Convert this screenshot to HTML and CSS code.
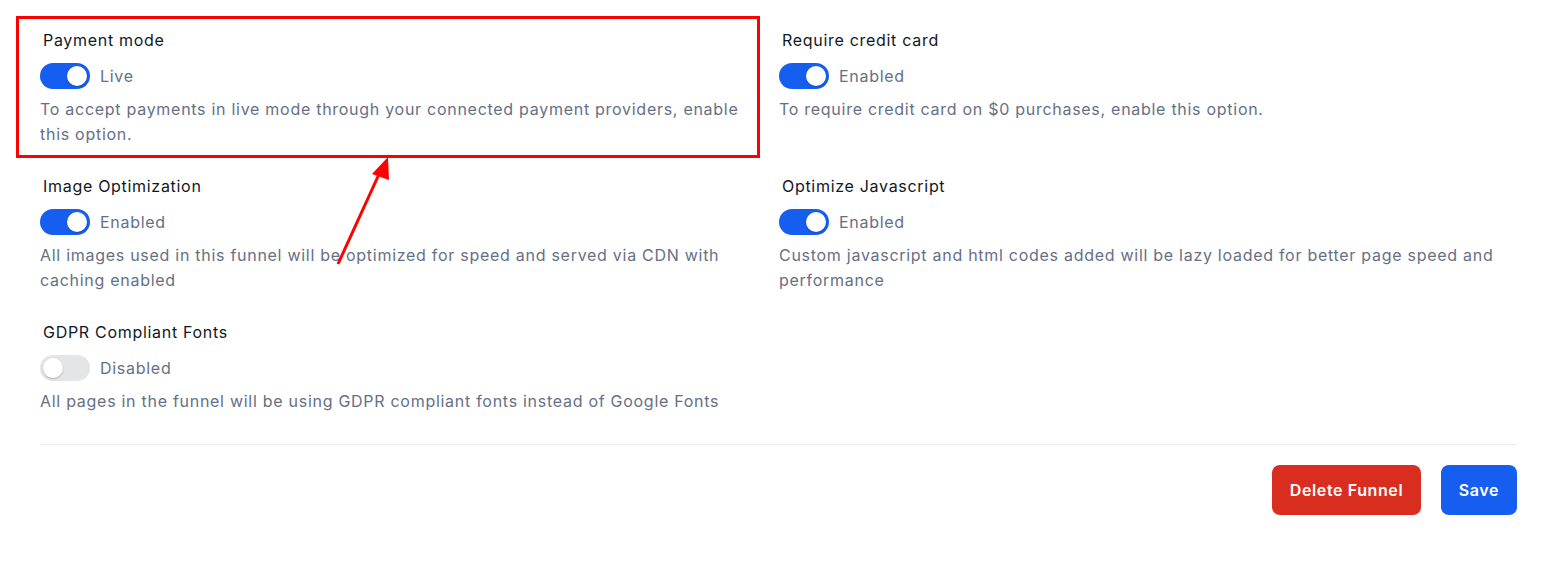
FILE: index.html
```html
<!DOCTYPE html>
<html>
<head>
<meta charset="utf-8">
<link rel="stylesheet" href="styles.css">
</head>
<body>
<div class="page">
  <div class="grid">
    <div class="item">
      <div class="label">Payment mode</div>
      <div class="toggle-row"><span class="toggle on"><span class="knob"></span></span><span class="state">Live</span></div>
      <div class="desc">To accept payments in live mode through your connected payment providers, enable this option.</div>
    </div>
    <div class="item">
      <div class="label">Require credit card</div>
      <div class="toggle-row"><span class="toggle on"><span class="knob"></span></span><span class="state">Enabled</span></div>
      <div class="desc">To require credit card on $0 purchases, enable this option.</div>
    </div>
    <div class="item">
      <div class="label">Image Optimization</div>
      <div class="toggle-row"><span class="toggle on"><span class="knob"></span></span><span class="state">Enabled</span></div>
      <div class="desc">All images used in this funnel will be optimized for speed and served via CDN with caching enabled</div>
    </div>
    <div class="item">
      <div class="label">Optimize Javascript</div>
      <div class="toggle-row"><span class="toggle on"><span class="knob"></span></span><span class="state">Enabled</span></div>
      <div class="desc">Custom javascript and html codes added will be lazy loaded for better page speed and performance</div>
    </div>
    <div class="item">
      <div class="label">GDPR Compliant Fonts</div>
      <div class="toggle-row"><span class="toggle"><span class="knob"></span></span><span class="state">Disabled</span></div>
      <div class="desc">All pages in the funnel will be using GDPR compliant fonts instead of Google Fonts</div>
    </div>
  </div>
  <div class="footer">
    <button class="btn btn-danger">Delete Funnel</button>
    <button class="btn btn-primary">Save</button>
  </div>
</div>
<div class="highlight"></div>
<svg class="arrow" width="1560" height="564" viewBox="0 0 1560 564">
  <line x1="338" y1="264" x2="380" y2="172" stroke="#ff0000" stroke-width="3"/>
  <polygon points="388,157 372,174 389,180" fill="#ff0000"/>
</svg>
</body>
</html>
```
FILE: styles.css
```css
* { box-sizing: border-box; }
html, body { margin: 0; padding: 0; background: #ffffff; }
body {
  font-family: Inter, "Noto Sans", sans-serif;
  width: 1560px;
  height: 564px;
  position: relative;
  overflow: hidden;
}
.page {
  padding: 28px 43px 0 40px;
}
.grid {
  display: grid;
  grid-template-columns: 739px 1fr;
  row-gap: 27.5px;
}
.item {
  padding-right: 14px;
}
.label {
  font-size: 16px;
  line-height: 24px;
  color: #101828;
  padding-left: 3px;
  letter-spacing: 0.7px;
}
.toggle-row {
  display: flex;
  align-items: center;
  gap: 10px;
  margin-top: 11px;
  height: 26px;
}
.toggle {
  width: 50px;
  height: 26px;
  border-radius: 13px;
  background: #e4e5e7;
  position: relative;
  flex: none;
}
.toggle.on { background: #155eef; }
.knob {
  position: absolute;
  top: 3px;
  left: 3px;
  width: 20px;
  height: 20px;
  border-radius: 50%;
  background: #ffffff;
  box-shadow: 0 1px 2px rgba(16,24,40,0.25);
}
.toggle.on .knob { left: 27px; }
.state {
  font-size: 16px;
  color: #667085;
  line-height: 24px;
  letter-spacing: 0.72px;
}
.desc {
  margin-top: 7.5px;
  font-size: 16px;
  line-height: 25px;
  color: #667085;
  letter-spacing: 0.72px;
}
.footer {
  margin-top: 30px;
  border-top: 1px solid #eaecf0;
  padding-top: 20px;
  display: flex;
  justify-content: flex-end;
  gap: 20px;
}
.btn {
  height: 50px;
  border: none;
  border-radius: 8px;
  font-family: Inter, "Noto Sans", sans-serif;
  font-size: 16px;
  font-weight: 600;
  letter-spacing: 0.6px;
  color: #ffffff;
  padding: 0;
  cursor: pointer;
}
.btn-danger { background: #d92d20; width: 149px; }
.btn-primary { background: #155eef; width: 76px; }
.highlight {
  position: absolute;
  left: 16px;
  top: 16px;
  width: 744px;
  height: 142px;
  border: 3px solid #ff0000;
  pointer-events: none;
}
.arrow {
  position: absolute;
  left: 0;
  top: 0;
  pointer-events: none;
}
```
